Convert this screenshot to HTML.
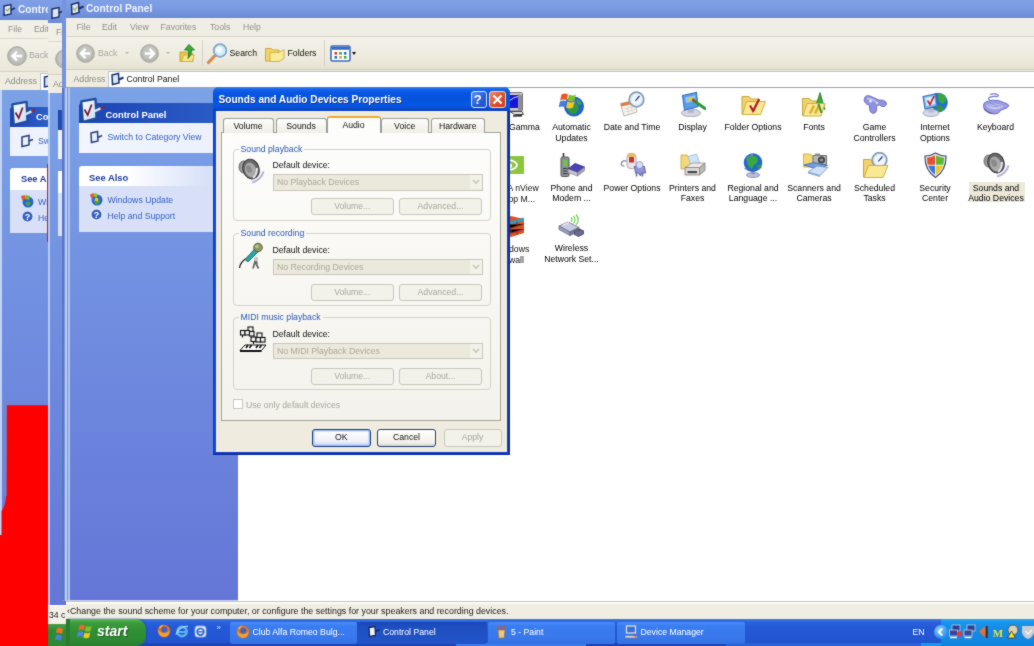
<!DOCTYPE html>
<html>
<head>
<meta charset="utf-8">
<title>Control Panel</title>
<style>
html,body{margin:0;padding:0;}
body{width:1034px;height:646px;overflow:hidden;position:relative;background:#fff;font-family:"Liberation Sans",sans-serif;font-size:8.7px;color:#000;}
.a{position:absolute;}
.t{position:absolute;white-space:nowrap;line-height:13px;}
.ttl{background:linear-gradient(#7f9fe6 0%,#7a9ae1 45%,#6f8fdb 85%,#6a88d4 100%);}
.ttxt{color:#eef2fc;font-weight:bold;font-size:10.2px;line-height:14px;}
.beige{background:#ece9d8;}
.mn{color:#8f8f8a;}
.side{background:linear-gradient(#7ba2e7,#6f8bdf 50%,#6476d7);}
.hd{background:linear-gradient(90deg,#1b44b2,#2d5fc9);}
.hd2{background:linear-gradient(90deg,#ffffff 30%,#c8d5f6);}
.pb{background:#d8e0f7;}
.lk{color:#335fc2;}
.lbl{position:absolute;width:80px;text-align:center;line-height:11px;font-size:8.7px;color:#000;white-space:nowrap;}
.dis{color:#aaa89a;}
.btn{position:absolute;border:1px solid #c9c7ba;border-radius:3px;background:#f3f2ea;box-sizing:border-box;text-align:center;color:#aaa89a;line-height:15px;}
.grp{position:absolute;border:1px solid #d5d3c6;border-radius:4px;box-sizing:border-box;}
.gl{position:absolute;background:#fbfbf8;color:#2a59b8;padding:0 2px;line-height:12px;}
.cmb{position:absolute;border:1px solid #c9c7ba;background:#ebe9dc;box-sizing:border-box;color:#aaa89a;line-height:15px;}
.tab{position:absolute;border:1px solid #9a9d9e;border-bottom:none;border-radius:3px 3px 0 0;background:linear-gradient(#fdfdfb,#efeee6);box-sizing:border-box;text-align:center;line-height:15px;color:#111;}
.tk{position:absolute;top:622px;height:22px;border-radius:2px;background:#3c81f0;color:#fff;box-sizing:border-box;line-height:21px;}
</style>
</head>
<body>
<svg width="0" height="0" style="position:absolute"><filter id="sb" x="0" y="0" width="100%" height="100%" color-interpolation-filters="sRGB"><feConvolveMatrix order="3" kernelMatrix="1 2 1 2 20 2 1 2 1" divisor="32" edgeMode="duplicate" preserveAlpha="true"/></filter></svg>
<div id="scr" style="position:absolute;left:0;top:0;width:1034px;height:646px;overflow:hidden;filter:url(#sb);">

<!-- ============ WINDOW 1 (back-most, x 0..48) ============ -->
<div class="a" style="left:0;top:0;width:48px;height:620px;overflow:hidden;">
  <div class="a ttl" style="left:0;top:0;width:48px;height:20px;"></div>
  <svg class="a" style="left:2px;top:3px" width="15" height="14" viewBox="0 0 15 14"><path d="M2 3 L9 1.5 L9 11 L2 12.5Z" fill="#dfe9f6" stroke="#1c2f6e" stroke-width="1.4"/><path d="M4 6l1.5 2 2-3" stroke="#8faa4a" stroke-width="1.2" fill="none"/><path d="M9 7l4-2" stroke="#1c2f6e" stroke-width="1.8"/></svg>
  <span class="t ttxt" style="left:18px;top:3px;">Contro</span>
  <div class="a" style="left:0;top:20px;width:48px;height:19px;background:#f1efe6;"></div>
  <div class="a" style="left:0;top:39px;width:48px;height:33px;background:linear-gradient(#f3f1e8,#ebe8da);"></div>
  <div class="a" style="left:0;top:72px;width:48px;height:18px;background:#efede2;"></div>
  <div class="a" style="left:0;top:38px;width:48px;height:1px;background:#dcd9cb;"></div>
  <div class="a" style="left:0;top:71px;width:48px;height:1px;background:#d3d0c2;"></div>
  <span class="t mn" style="left:8px;top:23px;">File</span>
  <span class="t mn" style="left:34px;top:23px;">Edit</span>
  <svg class="a" style="left:7px;top:46px" width="20" height="20" viewBox="0 0 20 20"><circle cx="10" cy="10" r="9.3" fill="#b9b9b5" stroke="#a3a39f" stroke-width="1"/><circle cx="10" cy="9" r="7" fill="#c6c6c2"/><path d="M15 10H6M10 5.5L5.5 10L10 14.5" stroke="#fff" stroke-width="2.4" fill="none"/></svg>
  <span class="t" style="left:29px;top:49px;color:#a5a5a0;">Back</span>
  <span class="t" style="left:5px;top:75px;color:#8a8a84;">Address</span>
  <div class="a" style="left:40px;top:73px;width:8px;height:16px;background:#fff;border-left:1px solid #b9c4d4;border-top:1px solid #b9c4d4;"></div>
  <svg class="a" style="left:43px;top:75px" width="6" height="13" viewBox="0 0 6 13"><path d="M1.5 2 L6 1 V11 L1.5 12Z" fill="#cfe0f2" stroke="#20336e" stroke-width="1.4"/></svg>
  <div class="a side" style="left:0;top:90px;width:48px;height:530px;"></div>
  <div class="a" style="left:0;top:90px;width:2px;height:530px;background:#c3d3f5;"></div>
  <!-- panel 1 -->
  <div class="a hd" style="left:10px;top:107px;width:38px;height:20px;border-radius:3px 0 0 0;"></div>
  <svg class="a" style="left:10px;top:99px" width="27" height="28" viewBox="0 0 27 28"><path d="M2.300 5.300 L16.500 2.800 L17.500 22.300 L3.800 25.800Z" fill="url(#cpg)" stroke="#1f4c9e" stroke-width="2.300" stroke-linejoin="round"/><path d="M5.500 13.500l3.200 5.500 4-10.500" stroke="#7a1626" stroke-width="1.700" fill="none"/><path d="M13 16.500l9-4.300" stroke="#d5e8fa" stroke-width="2.400"/><path d="M21.500 12.500l3.500-1.600" stroke="#8a2a3a" stroke-width="2.600"/></svg>
  <span class="t" style="left:36px;top:111px;color:#fff;font-weight:bold;font-size:9.3px;">Co</span>
  <div class="a pb" style="left:10px;top:127px;width:38px;height:29px;background:#eef2fc;"></div>
  <svg class="a" style="left:20px;top:134px" width="14" height="14" viewBox="0 0 14 14"><path d="M2 3 L9 1.5 V11 L2 12.5Z" fill="#e9f0f8" stroke="#29407c" stroke-width="1.5"/><path d="M9 7l4-1.5" stroke="#29407c" stroke-width="1.8"/></svg>
  <span class="t lk" style="left:38px;top:135px;">Sw</span>
  <!-- panel 2 -->
  <div class="a" style="left:10px;top:168px;width:38px;height:22px;background:#fff;border-radius:3px 0 0 0;"></div>
  <span class="t" style="left:21px;top:173px;color:#1f3f9a;font-weight:bold;font-size:9.3px;">See A</span>
  <div class="a pb" style="left:10px;top:190px;width:38px;height:43px;"></div>
  <svg class="a" style="left:20px;top:194px" width="14" height="14" viewBox="0 0 14 14"><circle cx="8" cy="8" r="5.5" fill="#2a63c9"/><path d="M5 9q3-3 6 0q-1 3-4 3z" fill="#3fa646"/><path d="M1 2l4-1 1 4-4 1z" fill="#e8582a"/><path d="M6 1l4 1-1 4-4-1z" fill="#7ab83a"/></svg>
  <svg class="a" style="left:21px;top:210px" width="13" height="13" viewBox="0 0 13 13"><circle cx="6.5" cy="6.5" r="5.6" fill="#3560c4" stroke="#dfe6f7" stroke-width="1.2"/><text x="6.5" y="9.8" font-size="9" font-weight="bold" text-anchor="middle" fill="#fff" font-family="Liberation Sans, sans-serif">?</text></svg>
  <span class="t lk" style="left:38px;top:196px;">Wi</span>
  <span class="t lk" style="left:38px;top:212px;">He</span>
</div>
<!-- red paint strokes -->
<div class="a" style="left:46.500px;top:164px;width:1.600px;height:78px;background:#d8142c;"></div>
<svg class="a" style="left:0;top:400px" width="49" height="246" viewBox="0 0 49 246"><path d="M6.700 5.200H48.200V246H0V135H1.500V111Q5.500 106 6.200 95Z" fill="#fe0000"/></svg>
<div class="a" style="left:2px;top:400px;width:4.500px;height:96px;background:#7389cf;opacity:.55;"></div>

<!-- ============ WINDOW 2 (x 48..65) ============ -->
<div class="a" style="left:48px;top:0;width:19px;height:646px;overflow:hidden;">
  <div class="a ttl" style="left:0;top:0;width:19px;height:23px;"></div>
  <svg class="a" style="left:2px;top:6px" width="15" height="14" viewBox="0 0 15 14"><path d="M2 3 L9 1.5 L9 11 L2 12.5Z" fill="#dfe9f6" stroke="#1c2f6e" stroke-width="1.4"/><path d="M9 7l4-2" stroke="#1c2f6e" stroke-width="1.8"/></svg>
  <div class="a" style="left:0;top:23px;width:19px;height:19px;background:#f1efe6;"></div>
  <div class="a" style="left:0;top:42px;width:19px;height:33px;background:linear-gradient(#f3f1e8,#ebe8da);"></div>
  <div class="a" style="left:0;top:75px;width:19px;height:18px;background:#efede2;"></div>
  <div class="a" style="left:0;top:41px;width:19px;height:1px;background:#dcd9cb;"></div>
  <div class="a" style="left:0;top:74px;width:19px;height:1px;background:#d3d0c2;"></div>
  <span class="t mn" style="left:8px;top:26px;">File</span>
  <svg class="a" style="left:7px;top:49px" width="20" height="20" viewBox="0 0 20 20"><circle cx="10" cy="10" r="9.3" fill="#b9b9b5" stroke="#a3a39f" stroke-width="1"/><circle cx="10" cy="9" r="7" fill="#c6c6c2"/></svg>
  <span class="t" style="left:5px;top:78px;color:#8a8a84;">Address</span>
  <div class="a side" style="left:0;top:93px;width:19px;height:512px;"></div>
  <div class="a" style="left:0;top:93px;width:1.5px;height:512px;background:#b5cbf1;"></div>
  <div class="a hd" style="left:10px;top:110px;width:8px;height:20px;"></div>
  <div class="a" style="left:10px;top:130px;width:8px;height:29px;background:#eef2fc;"></div>
  <div class="a" style="left:10px;top:171px;width:8px;height:22px;background:#fff;"></div>
  <div class="a pb" style="left:10px;top:193px;width:8px;height:43px;"></div>
  <div class="a" style="left:0;top:605px;width:19px;height:19px;background:#f3f1e8;border-top:1px solid #fff;"></div>
  <span class="t" style="left:1px;top:609px;color:#222;">34 c</span>
  <div class="a" style="left:0;top:623.5px;width:19px;height:23px;background:linear-gradient(#4a9e4a,#2f8a34 30%,#2d8832);"></div>
  <svg class="a" style="left:6px;top:627px" width="12" height="16" viewBox="0 0 12 16"><path d="M3 1q3-1 6 1l-1 5q-3-2-6-1z" fill="#e8742a"/><path d="M2 8q3-1 6 1l-1 5q-3-2-6-1z" fill="#4a7fe0"/></svg>
</div>

<!-- ============ WINDOW 3 (front, x 62..1034) ============ -->
<div class="a ttl" style="left:62px;top:0;width:972px;height:18px;"></div>
<div class="a" style="left:62px;top:0;width:3.5px;height:601px;background:#7693de;"></div>
<div class="a" style="left:62px;top:88px;width:2px;height:512px;background:#5b76c4;"></div>
<svg class="a" style="left:69px;top:1px" width="16" height="15" viewBox="0 0 16 15"><path d="M2.5 3.5 L9.5 1.5 L10 11.5 L3 13.5Z" fill="#e4eef2" stroke="#1b2f70" stroke-width="1.5"/><path d="M4.5 7l1.5 2.5 2-4" stroke="#9bb35a" stroke-width="1.3" fill="none"/><path d="M10 7.5l4.5-2" stroke="#1b2f70" stroke-width="2"/></svg>
<span class="t ttxt" style="left:86px;top:1.5px;">Control Panel</span>
<!-- menu -->
<div class="a" style="left:65.5px;top:18px;width:969px;height:18px;background:#f0eee4;"></div>
<div class="a" style="left:65.5px;top:36px;width:969px;height:1px;background:#d8d5c7;"></div>
<span class="t mn" style="left:76.5px;top:21px;">File</span>
<span class="t mn" style="left:102px;top:21px;">Edit</span>
<span class="t mn" style="left:130px;top:21px;">View</span>
<span class="t mn" style="left:160.5px;top:21px;">Favorites</span>
<span class="t mn" style="left:210px;top:21px;">Tools</span>
<span class="t mn" style="left:243px;top:21px;">Help</span>
<!-- toolbar -->
<div class="a" style="left:65.5px;top:37px;width:969px;height:32px;background:linear-gradient(#f3f1e9,#edeadd 70%,#e6e2d2);"></div>
<div class="a" style="left:65.5px;top:69px;width:969px;height:1px;background:#cfccbd;"></div>
<svg class="a" style="left:76px;top:43.5px" width="19" height="19" viewBox="0 0 20 20"><circle cx="10" cy="10" r="9.3" fill="#b5b5b1" stroke="#a5a5a1" stroke-width="1"/><circle cx="10" cy="9.2" r="7.2" fill="#c4c4c0"/><path d="M15 10H6.2M10 5.2L5.3 10L10 14.8" stroke="#fff" stroke-width="2.5" fill="none"/></svg>
<span class="t" style="left:98px;top:46.5px;color:#a9a9a3;">Back</span>
<span class="a" style="left:124.5px;top:52px;border:2.3px solid transparent;border-top:2.6px solid #b5b3a8;"></span>
<svg class="a" style="left:139.5px;top:43.5px" width="19" height="19" viewBox="0 0 20 20"><circle cx="10" cy="10" r="9.3" fill="#b5b5b1" stroke="#a5a5a1" stroke-width="1"/><circle cx="10" cy="9.2" r="7.2" fill="#c4c4c0"/><path d="M5 10h8.8M10 5.2L14.7 10L10 14.8" stroke="#fff" stroke-width="2.5" fill="none"/></svg>
<span class="a" style="left:165.5px;top:52px;border:2.3px solid transparent;border-top:2.6px solid #b5b3a8;"></span>
<svg class="a" style="left:178px;top:43px" width="20" height="20" viewBox="0 0 20 20"><path d="M2 9h6l1.5 1.5H15V18.5H2z" fill="#e9c94a" stroke="#b89a2a" stroke-width=".8"/><path d="M3.5 18.5L6 12h10.5l-2.5 6.500z" fill="#f7e48a" stroke="#c9a938" stroke-width=".7"/><path d="M11 1.500l5.500 5.500h-3q.5 5-3.500 8.500q1.500-4.500-.2-8.500H6.500z" fill="#3ea83a" stroke="#1f7a22" stroke-width=".9"/></svg>
<div class="a" style="left:201.500px;top:40px;width:1px;height:26px;background:#d5d2c3;"></div>
<svg class="a" style="left:206px;top:42px" width="23" height="23" viewBox="0 0 23 23"><path d="M2.500 20.500L9.500 13" stroke="#d88a4e" stroke-width="3.2" stroke-linecap="round"/><circle cx="14" cy="8.500" r="6.300" fill="#d5ecfa" stroke="#7fa6cc" stroke-width="1.800"/><circle cx="13" cy="7.500" r="3" fill="#f3fbff"/></svg>
<span class="t" style="left:229.500px;top:46.500px;color:#111;">Search</span>
<svg class="a" style="left:264px;top:43px" width="22" height="21" viewBox="0 0 22 21"><path d="M1.500 5.500h6l1.500 1.500h6v11h-13.500z" fill="#f0d36a" stroke="#c9a234" stroke-width=".9"/><path d="M6 9.500h9l5-3v9l-5 3h-9z" fill="#f9ea9c" stroke="#d3ad3e" stroke-width=".9"/></svg>
<span class="t" style="left:287.500px;top:46.500px;color:#111;">Folders</span>
<div class="a" style="left:324px;top:40px;width:1px;height:26px;background:#d5d2c3;"></div>
<svg class="a" style="left:329.500px;top:44.500px" width="21" height="17" viewBox="0 0 21 17"><rect x="1" y="1" width="19" height="15" rx="1.500" fill="#fff" stroke="#3b6cc2" stroke-width="1.600"/><rect x="1.800" y="1.800" width="17.400" height="3" fill="#3b6cc2"/><rect x="4.500" y="7" width="2.600" height="2.600" fill="#d33"/><rect x="9.200" y="7" width="2.600" height="2.600" fill="#3a3"/><rect x="13.900" y="7" width="2.600" height="2.600" fill="#36c"/><rect x="4.500" y="11" width="2.600" height="2.600" fill="#36c"/><rect x="9.200" y="11" width="2.600" height="2.600" fill="#d93"/><rect x="13.900" y="11" width="2.600" height="2.600" fill="#3a3"/></svg>
<span class="a" style="left:351.500px;top:52px;border:2.500px solid transparent;border-top:3px solid #111;"></span>
<!-- address bar -->
<div class="a" style="left:65.500px;top:70px;width:969px;height:18px;background:#efede2;"></div>
<span class="t" style="left:73.500px;top:72.500px;color:#8c8c86;">Address</span>
<div class="a" style="left:107.500px;top:70.500px;width:927px;height:16.5px;background:#fff;border:1px solid #b4c3d6;border-right:none;border-bottom:none;box-sizing:border-box;"></div>
<svg class="a" style="left:109.500px;top:72px" width="15" height="14" viewBox="0 0 15 14"><path d="M2 3 L8.500 1.500 L9 11 L2.500 12.500Z" fill="#d9e8f4" stroke="#1f3270" stroke-width="1.500"/><path d="M9 7.500l4.500-2" stroke="#1f3270" stroke-width="2"/></svg>
<span class="t" style="left:126.500px;top:72.500px;color:#111;">Control Panel</span>
<div class="a" style="left:65.500px;top:87px;width:969px;height:1px;background:#9fa1a3;"></div>

<!-- sidebar -->
<div class="a side" style="left:65.500px;top:88px;width:172.500px;height:512.500px;"></div>
<div class="a" style="left:64.500px;top:88px;width:2px;height:512.500px;background:#b9caf1;"></div>
<div class="a" style="left:66.500px;top:88px;width:1.500px;height:512.500px;background:#8597d6;"></div>
<div class="a" style="left:68.200px;top:88px;width:1.800px;height:512.500px;background:#abc3f1;"></div>
<div class="a" style="left:65.500px;top:600px;width:172.500px;height:1.200px;background:#c5d1f0;"></div>

<!-- sidebar panels (window 3) -->
<div class="a hd" style="left:79px;top:103px;width:159px;height:20px;border-radius:3px 0 0 0;"></div>
<svg class="a" style="left:79px;top:96px" width="27" height="28" viewBox="0 0 27 28"><defs><linearGradient id="cpg" x1="0" y1="0" x2="1" y2="1"><stop offset="0" stop-color="#ffffff"/><stop offset="1" stop-color="#c5daf4"/></linearGradient></defs><path d="M2.300 5.300 L16.500 2.800 L17.500 22.300 L3.800 25.800Z" fill="url(#cpg)" stroke="#1f4c9e" stroke-width="2.300" stroke-linejoin="round"/><path d="M5.500 13.500l3.200 5.500 4-10.500" stroke="#7a1626" stroke-width="1.700" fill="none"/><path d="M13 16.500l9-4.300" stroke="#d5e8fa" stroke-width="2.400"/><path d="M21.500 12.500l3.500-1.600" stroke="#8a2a3a" stroke-width="2.600"/></svg>
<span class="t" style="left:105.500px;top:107.600px;color:#fff;font-weight:bold;font-size:9.400px;">Control Panel</span>
<div class="a" style="left:79px;top:123px;width:159px;height:30px;background:linear-gradient(90deg,#f2f5fd,#eaeffb);"></div>
<svg class="a" style="left:89px;top:130px" width="14" height="14" viewBox="0 0 14 14"><path d="M2 3 L8.500 1.500 L9 11 L2.500 12.500Z" fill="#e6eef6" stroke="#2a417e" stroke-width="1.500"/><path d="M9 7.500l4-2" stroke="#2a417e" stroke-width="1.800"/></svg>
<span class="t lk" style="left:107.500px;top:131px;">Switch to Category View</span>

<div class="a hd2" style="left:79px;top:165.500px;width:159px;height:20.500px;border-radius:3px 0 0 0;"></div>
<span class="t" style="left:89px;top:170.500px;color:#1f3f9a;font-weight:bold;font-size:9.400px;">See Also</span>
<div class="a pb" style="left:79px;top:186px;width:159px;height:46px;"></div>
<svg class="a" style="left:89px;top:192px" width="14" height="14" viewBox="0 0 14 14"><circle cx="8" cy="8" r="5.500" fill="#2a63c9"/><path d="M4.500 9q3.500-3.500 6.500 0q-1 3.500-4 3.500z" fill="#3fa646"/><path d="M1 2.500l3.500-1.500 1 3.500-3.500 1.500z" fill="#e8582a"/><path d="M5.500 1l3.500 1-1 3.500-3.500-1z" fill="#86c03a"/><path d="M2.500 6.500l3-1 1 3-3 1z" fill="#3a6fe0"/><path d="M6.500 5.500l3 1-1 3-3-1z" fill="#f0c628"/></svg>
<svg class="a" style="left:89.500px;top:208px" width="13" height="13" viewBox="0 0 13 13"><circle cx="6.500" cy="6.500" r="5.600" fill="#3560c4" stroke="#e6ebf8" stroke-width="1.200"/><text x="6.500" y="9.800" font-size="9" font-weight="bold" text-anchor="middle" fill="#fff" font-family="Liberation Sans, sans-serif">?</text></svg>
<span class="t lk" style="left:107.500px;top:193.500px;">Windows Update</span>
<span class="t lk" style="left:107.500px;top:209.500px;">Help and Support</span>

<!-- content area -->
<div class="a" style="left:238px;top:88px;width:796px;height:513px;background:#fff;"></div>

<!-- ============ ICONS ============ -->
<svg class="a" style="left:497px;top:91px" width="28" height="27" viewBox="0 0 28 27"><rect x="1" y="1.500" width="24.500" height="18.500" rx="1" fill="#c9c9c9" stroke="#777" stroke-width="1"/><rect x="3.500" y="4" width="17.500" height="13" fill="#1616d6"/><path d="M21 3l4 1v15l-4 1z" fill="#8f8f8f"/><path d="M12 10q5-4 9-4.500" stroke="#cfd6ff" stroke-width="1" fill="none"/><path d="M13 20.500h12l1.500 3h-9z" fill="#e2e2e2" stroke="#444" stroke-width="1"/><path d="M16 25l9-.3" stroke="#222" stroke-width="1.500"/></svg>
<span class="t" style="left:509px;top:121px;color:#000;">Gamma</span>
<svg class="a" style="left:558.5px;top:91px" width="26" height="26" viewBox="0 0 26 26"><circle cx="15" cy="15.500" r="10" fill="#2463c4"/><circle cx="12.500" cy="12.500" r="5" fill="#4a8ae0" opacity=".7"/><path d="M8 17q4-6 11-3q2 5-3 9q-6 1-8-6z" fill="#2f9a3c"/><path d="M17 8q4 1 6 5l-4 1z" fill="#38a545"/><path d="M2.500 3.500q3.500-2 6.500 0l-1.500 6q-3-2-6.500 0z" fill="#e8592a"/><path d="M10 3.500q3.500 2 7 0l-1.500 6q-3.500 2-7 0z" fill="#7dbf2e"/><path d="M1 10.500q3.500-2 6.500 0l-1.500 6q-3-2-6.500 0z" fill="#3f7fe6"/><path d="M8.500 10.500q3.500 2 7 0l-1.500 6q-3.500 2-7 0z" fill="#f4c820"/></svg>
<span class="lbl" style="left:531.5px;top:121.7px;">Automatic</span>
<span class="lbl" style="left:531.5px;top:132.5px;">Updates</span>
<svg class="a" style="left:619px;top:91px" width="26" height="26" viewBox="0 0 26 26"><path d="M1.500 12.500L15 9.500l3 11.500L5 25z" fill="#f7f5f2" stroke="#b9b5b0" stroke-width="1"/><path d="M1.500 12.500L15 9.500l.8 3L2.300 15.500z" fill="#e87a3a"/><path d="M5 18l10-2.500M6 21l10-2.500M8 16.500l1.500 6M12 15.500l1.500 6" stroke="#d8cfc6" stroke-width=".8"/><circle cx="17.500" cy="8.500" r="7.300" fill="#dfeefb" stroke="#8a9cb4" stroke-width="1.800"/><circle cx="17.500" cy="8.500" r="5" fill="#eef7ff"/><path d="M17.500 8.500l3-3.500M17.500 8.500l-1 1.500" stroke="#2a3f7a" stroke-width="1.200"/></svg>
<span class="lbl" style="left:592px;top:121.7px;">Date and Time</span>
<svg class="a" style="left:680px;top:91px" width="26" height="26" viewBox="0 0 26 26"><ellipse cx="11" cy="22" rx="9.500" ry="3.800" fill="#d5d6e2" stroke="#9a9cb0" stroke-width=".8"/><path d="M8 17h6v5H8z" fill="#b5b8cc"/><path d="M2.500 4.500L16.500 1.500l1.500 14L4.500 19z" fill="#5a9ee8" stroke="#3a6fc0" stroke-width="1.100"/><path d="M5 6.500L15 4.200l.8 5.500L6 12z" fill="#8fcaf6"/><path d="M8 7l4.500-1 .5 3-4.500 1z" fill="#f0c040"/><path d="M13.500 9.500L25 17.500" stroke="#2f9a36" stroke-width="3.200" stroke-linecap="round"/><path d="M12.500 8l3.500 3" stroke="#8a5a2a" stroke-width="2.500"/></svg>
<span class="lbl" style="left:652.5px;top:121.7px;">Display</span>
<svg class="a" style="left:740px;top:92px" width="27" height="25" viewBox="0 0 27 25"><path d="M2 4.500h7l2 2.500h8V22H2z" fill="#efd36c" stroke="#c9a63a" stroke-width="1"/><path d="M2.500 22.500L6.500 9.500H25.500L20.500 22.500z" fill="#f9e894" stroke="#d0ad42" stroke-width="1"/><path d="M10 13.500l3 5.500 6-12" stroke="#c8202a" stroke-width="2" fill="none"/><path d="M10 13.500l3 5.500 6-12" stroke="#6a1414" stroke-width=".6" fill="none" transform="translate(.8 .4)"/></svg>
<span class="lbl" style="left:713px;top:121.7px;">Folder Options</span>
<svg class="a" style="left:801px;top:91px" width="27" height="27" viewBox="0 0 27 27"><path d="M1.500 7.500h7l2 2.500h8V24.500h-17z" fill="#efd36c" stroke="#c9a63a" stroke-width="1"/><path d="M19 1.500l5 17-9-4z" fill="#3aa83a" stroke="#1f7a22" stroke-width=".8"/><path d="M2 25L6 12.500H24L20 25z" fill="#f9e894" stroke="#d0ad42" stroke-width="1"/><path d="M9 22.500l4-8M14 22.500l4-8" stroke="#d9b030" stroke-width="2.600"/><path d="M17.500 13l3 9" stroke="#2f9a36" stroke-width="2"/></svg>
<span class="lbl" style="left:774px;top:121.7px;">Fonts</span>
<svg class="a" style="left:861px;top:94px" width="28" height="21" viewBox="0 0 28 21"><path d="M4 3q2-2.500 5-1l9 4q5-.5 7 2q1.500 3-1.500 4.500q-3 .5-5-1.500l-3 .5q1 4.500-1 7q-2.500 2-5-.5q-1.500-3-1-6.500q-3-1-5-3.500q-1-2.500.5-5z" fill="#8f92e0" stroke="#6a6dc4" stroke-width=".9"/><path d="M6 4.500q5 0 9 3.500" stroke="#c9cbf4" stroke-width="1.600" fill="none"/><circle cx="9.500" cy="7" r="1.500" fill="#e8e8f8"/><circle cx="16" cy="9" r="1.300" fill="#d5d7f4"/></svg>
<span class="lbl" style="left:834.5px;top:121.7px;">Game</span>
<span class="lbl" style="left:834.5px;top:132.5px;">Controllers</span>
<svg class="a" style="left:922px;top:91px" width="26" height="26" viewBox="0 0 26 26"><circle cx="16" cy="11.500" r="9.800" fill="#2a6fd0"/><path d="M16 2q6 0 9 6l-4 5q-4-1-5-5z" fill="#3aa644"/><path d="M14 14q5 0 8 3q-2 4-6 4.500z" fill="#2f9a3c"/><ellipse cx="9" cy="22" rx="8" ry="3.500" fill="#d5d8e6" stroke="#9a9eb4" stroke-width=".8"/><path d="M6.500 17h5v4.500h-5z" fill="#b5b9cf"/><path d="M1 5.500L13.500 3l1.500 12L3 18z" fill="#7db9f0" stroke="#3a72b8" stroke-width="1.100"/><path d="M3 7L12 5l1 8L4.500 15z" fill="#d9ecfb"/><path d="M5.500 9.500l2.500 4 4-8.500" stroke="#c8202a" stroke-width="1.700" fill="none"/></svg>
<span class="lbl" style="left:895px;top:121.7px;">Internet</span>
<span class="lbl" style="left:895px;top:132.5px;">Options</span>
<svg class="a" style="left:981.5px;top:93px" width="28" height="22" viewBox="0 0 28 22"><path d="M8 7q-3-1.500 0-3q4-1 7-.5q3-1-1-2.500q-4-.5-6 .5" stroke="#7a7dc8" stroke-width="1.300" fill="none"/><path d="M1.500 13q-.5-3 3-4.500q6-2 12-1l9 3.500q2.500 1.500 0 3.500l-7 3q-1.500 3.500-6 3.500q-5 0-8-3q-3-2-3-5z" fill="#9a9ce4" stroke="#6f72c6" stroke-width="1"/><path d="M4 12.500q6-3 13-1l5 2q-5 3-9 3q-5 0-9-4z" fill="#c9cbf2"/><path d="M6 12.500l10 1.500M8 10.500l11 3" stroke="#8a8dd8" stroke-width=".9"/><path d="M2 16q4 4 9 4.500" stroke="#5d5fa8" stroke-width="1.200" fill="none"/></svg>
<span class="lbl" style="left:955.5px;top:121.7px;">Keyboard</span>
<svg class="a" style="left:497px;top:156px" width="27" height="18" viewBox="0 0 27 18"><rect x="0" y="0" width="27" height="18" fill="#8cc63f"/><path d="M2 9q8-8 16-3q4 3 0 6q-6 4-12-1q3-5 8-2q1 2-1.500 2.500" stroke="#fff" stroke-width="1.800" fill="none"/></svg>
<span class="t" style="left:507.500px;top:182px;color:#111;">A nView</span>
<span class="t" style="left:508.500px;top:192.800px;color:#111;">op M...</span>
<svg class="a" style="left:559px;top:152px" width="26" height="26" viewBox="0 0 26 26"><path d="M4.500 1v5" stroke="#333" stroke-width="1.600"/><path d="M2 6.500q0-1.500 1.500-1.500h5q1.500 0 1.500 1.500V23q0 1.500-1.500 1.500h-5Q2 24.500 2 23z" fill="#8f9094" stroke="#55565c" stroke-width="1"/><rect x="3.800" y="8" width="4.800" height="6" fill="#6fc24a"/><path d="M4 16.500h4.500M4 19h4.500M4 21.500h4.500" stroke="#3a3b42" stroke-width="1.200"/><path d="M9 17l7-5.500 9.500 3.500-7 5.500z" fill="#4a43b4" stroke="#2a2580" stroke-width=".8"/><path d="M9 17l9.500 3.500V24L9 20.500z" fill="#c9c9d8" stroke="#7a7a92" stroke-width=".7"/><path d="M18.500 20.500l7-5.500v3.500l-7 5.500z" fill="#a5a6bc" stroke="#7a7a92" stroke-width=".7"/></svg>
<span class="lbl" style="left:531.5px;top:182.5px;">Phone and</span>
<span class="lbl" style="left:531.5px;top:193.3px;">Modem ...</span>
<svg class="a" style="left:620px;top:152px" width="27" height="26" viewBox="0 0 27 26"><rect x="7" y="1.500" width="9" height="15" rx="3.500" fill="#e9e6ea" stroke="#a9a4b0" stroke-width="1"/><rect x="9" y="4.500" width="5" height="6" fill="#c8352f"/><rect x="7.500" y="1.500" width="8" height="3.500" rx="1.700" fill="#e8c060"/><path d="M6.500 9q-4-1-5 2t3 3" stroke="#9a96a8" stroke-width="1.600" fill="none"/><path d="M16 13.500q3-2 6 0" stroke="#8a88a0" stroke-width="1.500" fill="none"/><path d="M14.500 14.500h10l1 6.500h-4l-1 3-2-3h-3z" fill="#8f95d8" stroke="#5d62a8" stroke-width="1"/><circle cx="19.500" cy="13" r="3.500" fill="#d9dcf2" stroke="#8a8fc8" stroke-width=".8"/><path d="M16.500 21v3.500M22.500 21v3.500" stroke="#6a6fb4" stroke-width="1.600"/></svg>
<span class="lbl" style="left:592px;top:182.5px;">Power Options</span>
<svg class="a" style="left:679px;top:153px" width="27" height="24" viewBox="0 0 27 24"><path d="M2 2h6l1.500 2H14v12H2z" fill="#f2d878" stroke="#d0ae48" stroke-width=".9"/><path d="M9 3.500L17.500 1l4 11-9 2.500z" fill="#cfe3f7" stroke="#9ab8dc" stroke-width=".8"/><path d="M6 14.500l7-4.500H26l-6 5z" fill="#ecebe8" stroke="#9a9a96" stroke-width=".9"/><path d="M6 14.500h14.500V22H6z" fill="#d9d8d4" stroke="#8a8a86" stroke-width=".9"/><path d="M20.500 15l5.500-5v7.500l-5.500 4.500z" fill="#b9b8b4" stroke="#8a8a86" stroke-width=".9"/><path d="M8.500 18h9.500v2.200H8.500z" fill="#4a4a48"/></svg>
<span class="lbl" style="left:652.5px;top:182.5px;">Printers and</span>
<span class="lbl" style="left:652.5px;top:193.3px;">Faxes</span>
<svg class="a" style="left:742px;top:152px" width="22" height="26" viewBox="0 0 22 26"><ellipse cx="11" cy="23" rx="6.500" ry="2.500" fill="#b9c0d8" stroke="#7a84a8" stroke-width=".8"/><path d="M9.500 18.500h3v4h-3z" fill="#8a94b8"/><path d="M2.500 16q8 7 17-1" stroke="#8a94c0" stroke-width="1.500" fill="none"/><circle cx="11" cy="10.500" r="9.300" fill="#2468cc"/><circle cx="8.500" cy="7.500" r="4" fill="#5a9ae8" opacity=".7"/><path d="M6 5q5-3 9 0q2 4-1 7q-3 1-4 5q-4-2-5-6q0-4 1-6z" fill="#3aa644"/><path d="M15 13q3-1 4.500 1q-1 3-3.500 4z" fill="#2f9a3c"/><path d="M10 1v3" stroke="#8a94c0" stroke-width="1.500"/></svg>
<span class="lbl" style="left:713px;top:182.5px;">Regional and</span>
<span class="lbl" style="left:713px;top:193.3px;">Language ...</span>
<svg class="a" style="left:801.5px;top:152px" width="27" height="26" viewBox="0 0 27 26"><path d="M1.500 2h7l1.500 2h5v11h-13.500z" fill="#f2d878" stroke="#d0ae48" stroke-width=".9"/><path d="M11 3.500h13.500v9H11z" fill="#b9b9b7" stroke="#6f6f6d" stroke-width="1"/><path d="M13 1.500h5v2h-5z" fill="#8f8f8d"/><circle cx="19.500" cy="8" r="3.300" fill="#55575c" stroke="#2f3034" stroke-width=".8"/><circle cx="19.500" cy="8" r="1.300" fill="#9aa0b0"/><path d="M2 13l10-2.500 13.500 3-11 3.500z" fill="#6f9ee4" stroke="#3f6bb4" stroke-width=".9"/><path d="M6 20l9-6 11 1.500-8 8z" fill="#cfe0f6" stroke="#7f9cc8" stroke-width=".9"/><path d="M6 20l12 3.500v1.500L6 21.500z" fill="#8fa9d4"/></svg>
<span class="lbl" style="left:774px;top:182.5px;">Scanners and</span>
<span class="lbl" style="left:774px;top:193.3px;">Cameras</span>
<svg class="a" style="left:862px;top:152px" width="27" height="27" viewBox="0 0 27 27"><path d="M1.500 7.500h7l2 2.500h8V25h-17z" fill="#efd36c" stroke="#c9a63a" stroke-width="1"/><circle cx="17.500" cy="8" r="7.300" fill="#dfeefb" stroke="#8a9cb4" stroke-width="1.800"/><circle cx="17.500" cy="8" r="5" fill="#eef7ff"/><path d="M17.500 8l3-3.500M17.500 8l-1.200 1.500" stroke="#2a3f7a" stroke-width="1.200"/><path d="M2 25.500L6.500 13.500H26L21 25.500z" fill="#f9e894" stroke="#d0ad42" stroke-width="1"/></svg>
<span class="lbl" style="left:834.5px;top:182.5px;">Scheduled</span>
<span class="lbl" style="left:834.5px;top:193.3px;">Tasks</span>
<svg class="a" style="left:923.5px;top:151.5px" width="23" height="27" viewBox="0 0 23 27"><path d="M11.500 1q5 3 10.500 3q.5 14-10.500 21.500Q.500 18 1 4q5.500 0 10.500-3z" fill="#dfe3ee" stroke="#4a4f6a" stroke-width="1.200"/><path d="M11.500 3.200q-4 2.300-8.500 2.500q0 4 1 7.500h7.500z" fill="#e8502a"/><path d="M11.500 3.200q4 2.300 8.500 2.500q0 4-1 7.500h-7.500z" fill="#5cb82e"/><path d="M4 13.200q2 6 7.500 9.800v-9.800z" fill="#3a78e0"/><path d="M19 13.200q-2 6-7.500 9.800v-9.800z" fill="#f2c81e"/><path d="M11.500 3v20M3 13.200h17" stroke="#eef0f6" stroke-width=".9"/></svg>
<span class="lbl" style="left:895px;top:182.5px;">Security</span>
<span class="lbl" style="left:895px;top:193.3px;">Center</span>
<div class="a" style="left:968.500px;top:182px;width:56px;height:20px;background:#ece9d8;"></div>
<svg class="a" style="left:982.5px;top:151.5px" width="27" height="26" viewBox="0 0 27 26"><path d="M14 24.500q9-2.500 11.500-11" stroke="#b9b3dc" stroke-width="2.200" fill="none"/><path d="M13 21.500q6.500-2 8.500-8" stroke="#c9c4e6" stroke-width="2" fill="none"/><ellipse cx="5.500" cy="9" rx="4.500" ry="6" fill="#9a9a9a" stroke="#555" stroke-width=".8"/><ellipse cx="13" cy="11" rx="8" ry="10" transform="rotate(-18 13 11)" fill="#6a6a6a" stroke="#3a3a3a" stroke-width="1"/><ellipse cx="12.500" cy="12" rx="5.500" ry="7.500" transform="rotate(-18 12.500 12)" fill="#a9a9a9"/><ellipse cx="11" cy="11" rx="2.800" ry="3.800" transform="rotate(-18 11 11)" fill="#8a8a8a"/><path d="M15 20q4-3 4-10" stroke="#e2e2e2" stroke-width="2" fill="none"/></svg>
<span class="lbl" style="left:956px;top:182.5px;">Sounds and</span>
<span class="lbl" style="left:956px;top:193.3px;">Audio Devices</span>
<svg class="a" style="left:497px;top:214px" width="27" height="24" viewBox="0 0 27 24"><path d="M2 6l12-4 13 3v14l-13 4-12-3z" fill="#d8542a"/><path d="M2 6l12 3 13-4" stroke="#2aa0c8" stroke-width="3" fill="none"/><path d="M2 11l12 3 13-4M2 16l12 3 13-4M8 7.500v4M20 7.500v4M14 14v5M8 17v4M20 16.500v4" stroke="#8a2a14" stroke-width="1"/></svg>
<span class="t" style="left:509px;top:242.700px;color:#111;">dows</span>
<span class="t" style="left:509px;top:253.500px;color:#111;">wall</span>
<svg class="a" style="left:558px;top:214px" width="27" height="24" viewBox="0 0 27 24"><path d="M13 3.500q2 2 0 4.500M15.500 2q3 3.500 0 7.500M18 .500q4.500 5 0 10.500" stroke="#6fcf4a" stroke-width="1.200" fill="none"/><path d="M1 12l9-4 11 5.500-9 4.500z" fill="#c9cbe0" stroke="#7a7d9c" stroke-width=".9"/><path d="M1 12l11 6v3.500L1 15.500z" fill="#9a9cba" stroke="#6a6d8c" stroke-width=".8"/><path d="M12 18l9-4.500V17l-9 4.500z" fill="#7a7c9c" stroke="#5a5d7c" stroke-width=".8"/><path d="M16.500 17l5-2.500 4 2-5 2.500z" fill="#4f5170"/><path d="M16.500 17v3.500l4 2 5-2.500v-3.500" fill="#6a6c8c" stroke="#3a3c5a" stroke-width=".8"/><path d="M5 11l6-2.500" stroke="#f2f2fa" stroke-width="1.200"/></svg>
<span class="lbl" style="left:531.5px;top:243.2px;">Wireless</span>
<span class="lbl" style="left:531.5px;top:254.0px;">Network Set...</span>

<!-- ============ DIALOG ============ -->
<div class="a" style="left:213px;top:87px;width:297px;height:367.500px;border-radius:6px 6px 0 0;background:#1540c4;overflow:hidden;">
  <div class="a" style="left:0;top:0;width:297px;height:23.500px;background:linear-gradient(#3c82f0 0,#1263ea 2.500px,#0756e2 6px,#0553dc 12px,#0757e4 18px,#0a50d6 21px,#0b40b8 23.500px);"></div>
  <div class="a" style="left:3px;top:23.500px;width:291px;height:341px;background:#efecdf;"></div>
  <div class="a" style="left:0;top:23.500px;width:3px;height:344px;background:linear-gradient(90deg,#0a3cc8,#1a52e0);"></div>
  <div class="a" style="left:294px;top:23.500px;width:3px;height:344px;background:linear-gradient(90deg,#1a48cc,#0a2490);"></div>
  <div class="a" style="left:0;top:364.500px;width:297px;height:3px;background:linear-gradient(#1a48cc,#0a2490);"></div>
  <span class="t ttxt" style="left:5.500px;top:6.300px;color:#fff;font-size:10.150px;text-shadow:0.500px 0.500px 0.500px #0a2a80;">Sounds and Audio Devices Properties</span>
  <!-- help -->
  <div class="a" style="left:257.500px;top:4px;width:16.500px;height:17px;border-radius:3px;box-sizing:border-box;border:1px solid #cfe0fb;background:linear-gradient(135deg,#5a90ee,#2a5fd8 55%,#2050c4);"></div>
  <span class="t" style="left:260.800px;top:4.500px;color:#fff;font-weight:bold;font-size:13px;line-height:16px;">?</span>
  <!-- close -->
  <div class="a" style="left:276px;top:4px;width:17px;height:17px;border-radius:3px;box-sizing:border-box;border:1px solid #f3d3c9;background:linear-gradient(135deg,#ee8a6a,#dc4f2c 55%,#c83c1c);"></div>
  <svg class="a" style="left:276px;top:4px" width="17" height="17" viewBox="0 0 17 17"><path d="M4.500 4.500l8 8M12.500 4.500l-8 8" stroke="#fff" stroke-width="2.200"/></svg>
</div>
<!-- tab panel -->
<div class="a" style="left:221px;top:132px;width:280px;height:289px;box-sizing:border-box;border:1px solid #a3a499;background:linear-gradient(#fdfdfc,#f6f5f0 70%,#f3f2ec);"></div>
<div class="tab" style="left:222.500px;top:118px;width:51px;height:14.500px;">Volume</div>
<div class="tab" style="left:275.500px;top:118px;width:51px;height:14.500px;">Sounds</div>
<div class="tab" style="left:380.500px;top:118px;width:48.500px;height:14.500px;">Voice</div>
<div class="tab" style="left:430.500px;top:118px;width:54.500px;height:14.500px;">Hardware</div>
<div class="tab" style="left:326.500px;top:115.500px;width:54px;height:17.500px;background:#fdfdfc;border-top:2px solid #f0a830;line-height:14.500px;">Audio</div>

<!-- group 1 -->
<div class="grp" style="left:233px;top:148.500px;width:257.500px;height:72.500px;"></div>
<span class="gl" style="left:238.500px;top:142.700px;">Sound playback</span>
<svg class="a" style="left:237.500px;top:158px" width="27" height="26" viewBox="0 0 27 26"><path d="M14 24.500q9-2.500 11.500-11" stroke="#b9b3dc" stroke-width="2.200" fill="none"/><path d="M13 21.500q6.500-2 8.500-8" stroke="#c9c4e6" stroke-width="2" fill="none"/><ellipse cx="5.500" cy="9" rx="4.500" ry="6" fill="#9a9a9a" stroke="#555" stroke-width=".8"/><ellipse cx="13" cy="11" rx="8" ry="10" transform="rotate(-18 13 11)" fill="#6a6a6a" stroke="#3a3a3a" stroke-width="1"/><ellipse cx="12.500" cy="12" rx="5.500" ry="7.500" transform="rotate(-18 12.500 12)" fill="#a9a9a9"/><ellipse cx="11" cy="11" rx="2.800" ry="3.800" transform="rotate(-18 11 11)" fill="#8a8a8a"/><path d="M15 20q4-3 4-10" stroke="#e2e2e2" stroke-width="2" fill="none"/></svg>
<span class="t" style="left:272.500px;top:158.700px;color:#111;">Default device:</span>
<div class="cmb" style="left:272.500px;top:173.500px;width:210.500px;height:17px;padding-left:3.500px;">No Playback Devices</div>
<div class="a" style="left:469.500px;top:175px;width:12px;height:14px;background:#f3f2ea;"></div>
<svg class="a" style="left:471.500px;top:179px" width="8" height="6" viewBox="0 0 8 6"><path d="M1 1l3 3.200L7 1" stroke="#c5c3b4" stroke-width="1.500" fill="none"/></svg>
<div class="btn" style="left:311px;top:198px;width:82.500px;height:17px;">Volume...</div>
<div class="btn" style="left:399px;top:198px;width:83px;height:17px;">Advanced...</div>

<!-- group 2 -->
<div class="grp" style="left:233px;top:232.500px;width:257.500px;height:73.500px;"></div>
<span class="gl" style="left:238.500px;top:227px;background:#f9f9f5;">Sound recording</span>
<svg class="a" style="left:238px;top:242px" width="26" height="28" viewBox="0 0 26 28"><path d="M1.500 26q1-7 8-10" stroke="#222" stroke-width="1.300" fill="none"/><path d="M7 17.500L17 6.500l3.500 3L10 20z" fill="#2aa3a0" stroke="#156a6a" stroke-width=".8"/><circle cx="20" cy="5.500" r="4.300" fill="#8d9a62" stroke="#4e5830" stroke-width=".9"/><circle cx="19" cy="4.500" r="1.800" fill="#b9c48e"/><path d="M17.500 16.500l1.500 5.500M15 26.500l2-7 3.500 7" stroke="#6a6a6a" stroke-width="1.800" fill="none"/><circle cx="18" cy="17" r="2.200" fill="#c9c4c9"/></svg>
<span class="t" style="left:272.500px;top:243.800px;color:#111;">Default device:</span>
<div class="cmb" style="left:272.500px;top:258.800px;width:210.500px;height:16.500px;padding-left:3.500px;">No Recording Devices</div>
<div class="a" style="left:469.500px;top:260.300px;width:12px;height:13.500px;background:#f3f2ea;"></div>
<svg class="a" style="left:471.500px;top:264.300px" width="8" height="6" viewBox="0 0 8 6"><path d="M1 1l3 3.200L7 1" stroke="#c5c3b4" stroke-width="1.500" fill="none"/></svg>
<div class="btn" style="left:311px;top:283.500px;width:82.500px;height:17px;">Volume...</div>
<div class="btn" style="left:399px;top:283.500px;width:83px;height:17px;">Advanced...</div>

<!-- group 3 -->
<div class="grp" style="left:233px;top:316.500px;width:257.500px;height:73.500px;"></div>
<span class="gl" style="left:238.500px;top:311px;background:#f7f6f1;">MIDI music playback</span>
<svg class="a" style="left:239px;top:326px" width="28" height="27" viewBox="0 0 28 27"><g fill="#f3f3f3" stroke="#111" stroke-width="1.100"><rect x="9" y="1" width="5" height="4.500"/><rect x="1.500" y="4.500" width="4.500" height="4.500"/><rect x="6" y="4.500" width="4.500" height="4.500"/><rect x="10.500" y="5.500" width="4.500" height="4.500"/><rect x="18" y="7" width="5" height="4.500"/><rect x="12" y="11" width="5" height="4.500"/><rect x="17" y="11.500" width="4.500" height="4.500"/><rect x="21.500" y="11.500" width="4.500" height="4.500"/></g><path d="M3.500 9v2.500M14.500 15.500V18" stroke="#111" stroke-width="1.200"/><path d="M6 19h21l-4.500 5.500H1z" fill="#fff" stroke="#111" stroke-width="1"/><path d="M1 24.500h21.500v1.500H1z" fill="#111"/><path d="M9 19l-2 3M12.500 19l-2 3M19 19l-2 3M22.500 19l-2 3" stroke="#111" stroke-width="1.600"/></svg>
<span class="t" style="left:272.500px;top:328px;color:#111;">Default device:</span>
<div class="cmb" style="left:272.500px;top:342.800px;width:210.500px;height:16.500px;padding-left:3.500px;">No MIDI Playback Devices</div>
<div class="a" style="left:469.500px;top:344.300px;width:12px;height:13.500px;background:#f3f2ea;"></div>
<svg class="a" style="left:471.500px;top:348.300px" width="8" height="6" viewBox="0 0 8 6"><path d="M1 1l3 3.200L7 1" stroke="#c5c3b4" stroke-width="1.500" fill="none"/></svg>
<div class="btn" style="left:311px;top:367.500px;width:82.500px;height:17px;">Volume...</div>
<div class="btn" style="left:399px;top:367.500px;width:83px;height:17px;">About...</div>

<div class="a" style="left:232.800px;top:399.300px;width:10px;height:10px;box-sizing:border-box;border:1px solid #cbc9bc;background:#fff;"></div>
<span class="t dis" style="left:246px;top:398.500px;">Use only default devices</span>

<div class="a" style="left:312px;top:429px;width:58.500px;height:17.500px;box-sizing:border-box;border:1px solid #163a8a;border-radius:3px;background:linear-gradient(#fff,#eef1f8 70%,#c5d4f2);box-shadow:inset 0 0 0 1.500px #a9c3f5;text-align:center;line-height:15.500px;color:#111;">OK</div>
<div class="a" style="left:377px;top:429px;width:59px;height:17.500px;box-sizing:border-box;border:1px solid #27407a;border-radius:3px;background:linear-gradient(#fff,#f1f0e8 80%,#d9d6c8);text-align:center;line-height:15.500px;color:#111;">Cancel</div>
<div class="btn" style="left:443.500px;top:429px;width:58px;height:17.500px;line-height:15.500px;">Apply</div>

<!-- status bar -->
<div class="a" style="left:65.500px;top:601px;width:969px;height:18px;background:#f0eee3;border-top:1px solid #c9c6b8;box-sizing:border-box;"></div>
<div class="a" style="left:65.500px;top:602px;width:969px;height:1.500px;background:#fbfaf5;"></div>
<span class="t" style="left:67px;top:604.500px;color:#1a1a1a;font-size:8.850px;">&#8249;Change the sound scheme for your computer, or configure the settings for your speakers and recording devices.</span>

<!-- taskbar -->
<div class="a" style="left:65.500px;top:619px;width:969px;height:27px;background:linear-gradient(#3f7ce8 0,#2a62dc 3px,#2458d6 9px,#2356d3 20px,#2050c8 27px);"></div>
<div class="a" style="left:65.500px;top:642.500px;width:969px;height:4px;background:linear-gradient(90deg,#1c46b8 0,#1c46b8 390px,#3a7cec 390px,#3a7cec 520px,#1c46b8 520px,#1c46b8 660px,#2a62d8 660px,#2a62d8 855px,#1b97ee 855px);"></div>
<!-- start -->
<div class="a" style="left:65.500px;top:619px;width:80px;height:27px;border-radius:0 10px 10px 0;background:linear-gradient(#5cb85a 0,#3c9c3c 4px,#2f8f33 12px,#2e8b32 20px,#2a7f2e 27px);box-shadow:1px 0 2px #1d4fb8;"></div>
<div class="a" style="left:65.500px;top:619px;width:4px;height:27px;background:#2b7a30;"></div>
<svg class="a" style="left:77px;top:622.500px" width="17" height="17" viewBox="0 0 17 17"><path d="M2.500 2.500q3-1.500 5.500 0l-1.200 5q-2.500-1.500-5.500 0z" fill="#e8672a"/><path d="M9 3q3 1.500 5.800 0l-1.200 5q-2.800 1.500-5.800 0z" fill="#7cc02e"/><path d="M1 9q3-1.500 5.500 0l-1.200 5q-2.500-1.500-5.500 0z" fill="#4a86ea"/><path d="M7.500 9.500q3 1.500 5.800 0l-1.200 5q-2.800 1.500-5.800 0z" fill="#f2c81e"/></svg>
<span class="t" style="left:97px;top:622px;color:#fff;font-weight:bold;font-style:italic;font-size:14px;line-height:18px;text-shadow:1px 1px 1px #245a28;">start</span>
<!-- quick launch -->
<svg class="a" style="left:156.500px;top:624px" width="14" height="14" viewBox="0 0 14 14"><circle cx="7" cy="7" r="6.300" fill="#e2701c"/><circle cx="7.300" cy="5.800" r="3" fill="#3f62c8"/><path d="M1 5.500q2.500 3.500 6 3.500q3.500 0 5.500-2.500q0 6-5.500 6.500q-5.500-.5-6-7.500z" fill="#f0a030"/><path d="M2 3q2-2.500 5-2.500q-3 1.500-3.500 4z" fill="#f6c050"/></svg>
<svg class="a" style="left:175px;top:624px" width="14" height="14" viewBox="0 0 14 14"><circle cx="7" cy="7.500" r="4.600" fill="none" stroke="#59b3f2" stroke-width="2.600"/><path d="M3 8h8" stroke="#59b3f2" stroke-width="2"/><path d="M1 10.500q4-9 12-8" stroke="#9fd4fa" stroke-width="1.300" fill="none"/></svg>
<svg class="a" style="left:193.500px;top:624.500px" width="13" height="13" viewBox="0 0 13 13"><rect x="1" y="1" width="11" height="11" rx="2.500" fill="#dfe9fb" stroke="#8fb0ec" stroke-width="1"/><circle cx="6.500" cy="6.800" r="3.300" fill="none" stroke="#3a66c8" stroke-width="1.700"/><path d="M4 6.800h5" stroke="#3a66c8" stroke-width="1.300"/></svg>
<span class="t" style="left:216.500px;top:621px;color:#cfe0fb;font-size:8px;">&#187;</span>
<!-- task buttons -->
<div class="tk" style="left:229.500px;width:127px;background:linear-gradient(#4a8df6,#3a7df0 4px,#3878ec 16px,#3370e2);"></div>
<div class="tk" style="left:357px;width:130px;background:linear-gradient(#1a47b5,#1e4fc2 5px,#2154c8);"></div>
<div class="tk" style="left:487.500px;width:127.500px;background:linear-gradient(#4a8df6,#3a7df0 4px,#3878ec 16px,#3370e2);"></div>
<div class="tk" style="left:616.500px;width:128px;background:linear-gradient(#4a8df6,#3a7df0 4px,#3878ec 16px,#3370e2);"></div>
<svg class="a" style="left:236px;top:624.500px" width="14" height="14" viewBox="0 0 14 14"><circle cx="7" cy="7" r="6.300" fill="#e2701c"/><circle cx="7.300" cy="5.800" r="3" fill="#3f62c8"/><path d="M1 5.500q2.500 3.500 6 3.500q3.500 0 5.500-2.500q0 6-5.500 6.500q-5.500-.5-6-7.500z" fill="#f0a030"/><path d="M2 3q2-2.500 5-2.500q-3 1.500-3.500 4z" fill="#f6c050"/></svg>
<span class="t" style="left:252.500px;top:625.500px;color:#fff;">Club Alfa Romeo Bulg...</span>
<svg class="a" style="left:366.500px;top:625px" width="13" height="13" viewBox="0 0 13 13"><path d="M2 2.500 L8 1.500 L8.500 10.500 L2.500 11.500Z" fill="#eef3f8" stroke="#16265c" stroke-width="1.300"/><path d="M8.500 6.500l4-2" stroke="#16265c" stroke-width="1.800"/></svg>
<span class="t" style="left:383px;top:625.500px;color:#fff;">Control Panel</span>
<svg class="a" style="left:496px;top:624.500px" width="11" height="14" viewBox="0 0 11 14"><path d="M2 5h7l-.8 8H2.800z" fill="#e8c98a" stroke="#a3773a" stroke-width=".8"/><path d="M3 5l-1-4M5.500 5V.5M8 5l1-4" stroke="#c9542a" stroke-width="1.400"/></svg>
<span class="t" style="left:511px;top:625.500px;color:#fff;">5 - Paint</span>
<svg class="a" style="left:624px;top:624.500px" width="14" height="14" viewBox="0 0 14 14"><rect x="2.500" y="1" width="9" height="7" fill="#3a6fd8" stroke="#d9dde6" stroke-width="1.300"/><path d="M1 10.500h12v2.500H1z" fill="#cfd2da" stroke="#6a6e7a" stroke-width=".6"/><path d="M9 9.500l3 2" stroke="#d33" stroke-width="1.400"/></svg>
<span class="t" style="left:640.500px;top:625.500px;color:#fff;">Device Manager</span>
<!-- tray -->
<span class="t" style="left:912.500px;top:625.500px;color:#fff;">EN</span>
<div class="a" style="left:940.500px;top:619px;width:94px;height:27px;background:linear-gradient(#2aa4f4 0,#1792ea 4px,#128ae6 14px,#1185e0 27px);"></div>
<div class="a" style="left:934px;top:625px;width:13.500px;height:13.500px;border-radius:7px;background:radial-gradient(circle at 40% 35%,#8fd0ff,#2a8cf0 70%);"></div>
<svg class="a" style="left:934px;top:625px" width="14" height="14" viewBox="0 0 14 14"><path d="M8.300 3.500L4.800 7l3.500 3.500" stroke="#fff" stroke-width="1.900" fill="none"/></svg>
<svg class="a" style="left:949px;top:624px" width="85" height="16" viewBox="0 0 85 16"><rect x="3" y="1" width="8" height="6" fill="#2b3f8f" stroke="#c9d0e0" stroke-width=".8"/><rect x="0.500" y="6" width="8" height="6" fill="#33479c" stroke="#c9d0e0" stroke-width=".8"/><path d="M1 13.500h7" stroke="#e8ecf4" stroke-width="1.600"/><circle cx="10.500" cy="10" r="2.700" fill="#e03a3a"/><rect x="18" y="1" width="8" height="6" fill="#2b3f8f" stroke="#c9d0e0" stroke-width=".8"/><rect x="15" y="6" width="8" height="6" fill="#33479c" stroke="#c9d0e0" stroke-width=".8"/><path d="M15.500 13.500h7" stroke="#e8ecf4" stroke-width="1.600"/><path d="M30 7.500l6-5v11z" fill="#e8702a"/><rect x="36.800" y="2" width="2" height="12" fill="#3a2f2a"/><text x="49" y="12.500" font-size="11" font-weight="bold" text-anchor="middle" fill="#e8e23a" font-family="Liberation Serif, serif">M</text><circle cx="64" cy="6" r="5" fill="#d9d2b8" stroke="#5a5a4a" stroke-width="1"/><path d="M58.500 14l4-7 4 7z" fill="#f5e02a" stroke="#3a3a2a" stroke-width=".8"/><path d="M73 2h12v7q-2 5-6 6q-4-1-6-6z" fill="#c9ccd2"/><path d="M76.500 7l2.500 3 4-4" stroke="#f2f2f2" stroke-width="1.600" fill="none"/></svg>

</div>
</body>
</html>
